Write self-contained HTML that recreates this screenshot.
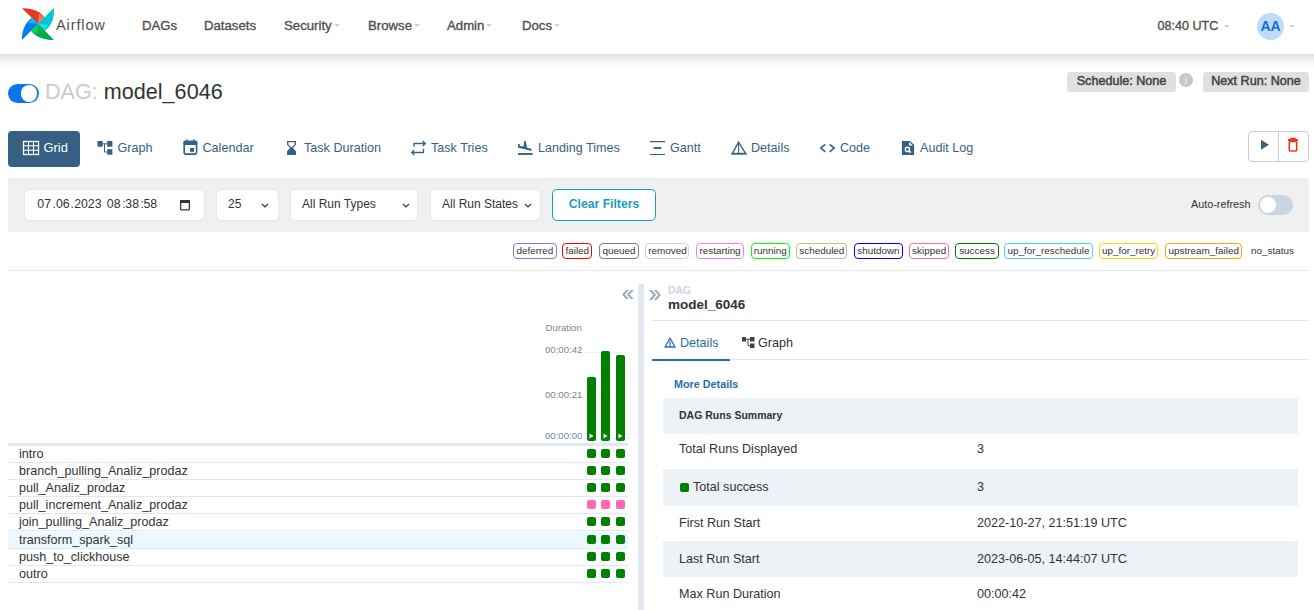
<!DOCTYPE html>
<html><head><meta charset="utf-8">
<style>
*{box-sizing:border-box;margin:0;padding:0}
html,body{width:1314px;height:610px;overflow:hidden;background:#fff;font-family:"Liberation Sans",sans-serif;color:#51504f;font-size:12.6px}
.a{position:absolute;white-space:nowrap}
#nav{position:absolute;left:0;top:0;width:1314px;height:54px;background:#fff;z-index:2}
#shd{position:absolute;left:0;top:54px;width:1314px;height:17px;background:linear-gradient(rgba(0,0,0,.13),rgba(0,0,0,.07) 25%,rgba(0,0,0,.025) 60%,rgba(0,0,0,0));z-index:1}
.nl{position:absolute;top:18px;font-size:13.2px;font-weight:400;-webkit-text-stroke:0.35px #51504f;color:#51504f;line-height:16px}
.car{display:inline-block;width:0;height:0;border-left:3px solid transparent;border-right:3px solid transparent;border-top:3px solid #dcc8e0;vertical-align:baseline;margin-left:2px;position:relative;top:-3px;-webkit-text-stroke:0}
.tab{position:absolute;top:130px;height:36px;line-height:36px;color:#365f84;font-size:12.6px}
.tab svg{position:absolute}
.fb{position:absolute;background:#fff;border:1px solid #e2e8f0;border-radius:5px;height:32px;top:189px;color:#333;font-size:12px;line-height:30px}
.dt{top:197px;font-size:12.3px;line-height:14px;color:#333}
.lg{position:absolute;top:243px;height:15.5px;border:1px solid;border-radius:4px;font-size:9.9px;line-height:13.5px;text-align:center;color:#333;background:#fff}
.row{position:absolute;left:8px;width:620px;height:17.1px;border-bottom:1px solid #e2e8f0;font-size:12.6px;color:#333;line-height:16px}
.cl{font-size:9.6px;color:#7a8699;line-height:11px}
.row span{position:absolute;left:11px;top:0}
.sq{position:absolute;width:9px;height:9px;border-radius:2px;background:#008000;top:3px}
.tk{left:679px;font-size:12.6px;color:#333;line-height:14px}
.tv{left:977px;font-size:12.6px;color:#333;line-height:14px}
</style></head><body>
<div id="shd"></div>
<div id="nav">
  <svg class="a" style="left:18px;top:4px" width="40" height="40" viewBox="0 0 610 610">
    <path d="M60,65 L305,300 L405,210 C350,120 230,60 60,65 Z" fill="#e43921"/>
    <path d="M320,150 L405,210 L305,300 Z" fill="#ff7557"/>
    <path d="M548,60 L305,300 L405,410 C520,330 555,200 548,60 Z" fill="#00c7d4"/>
    <path d="M455,320 L405,410 L305,300 Z" fill="#11e1ee"/>
    <path d="M548,548 L305,300 L200,410 C260,490 380,550 548,548 Z" fill="#00ad46"/>
    <path d="M290,455 L200,410 L305,300 Z" fill="#04d659"/>
    <path d="M60,548 L305,300 L215,205 C100,290 55,420 60,548 Z" fill="#017cee"/>
    <path d="M155,290 L215,205 L305,300 Z" fill="#0cb6ff"/>
  </svg>
  <div class="a" style="left:56px;top:16px;font-size:14.6px;letter-spacing:0.85px;color:#51504f;line-height:18px">Airflow</div>
  <div class="nl" style="left:142px">DAGs</div>
  <div class="nl" style="left:204px">Datasets</div>
  <div class="nl" style="left:284px">Security<span class="car"></span></div>
  <div class="nl" style="left:368px">Browse<span class="car"></span></div>
  <div class="nl" style="left:447px">Admin<span class="car"></span></div>
  <div class="nl" style="left:522px">Docs<span class="car"></span></div>
  <div class="nl" style="left:1157.5px;font-size:12.6px">08:40 UTC<span class="car" style="margin-left:6px;top:-2px"></span></div>
  <div class="a" style="left:1257px;top:13px;width:27px;height:27px;border-radius:50%;background:#bfdbf9;color:#0a6fe0;font-weight:700;font-size:14px;line-height:27px;text-align:center">AA</div>
  <div style="position:absolute;left:1289px;top:25px;width:0;height:0;border-left:3px solid transparent;border-right:3px solid transparent;border-top:3px solid #dcc8e0"></div>
</div>

<!-- DAG title -->
<div class="a" style="left:8px;top:84px;width:31px;height:19px;border-radius:10px;background:#0b76ea"></div>
<div class="a" style="left:20.5px;top:85px;width:16.8px;height:17px;border-radius:50%;background:#fff"></div>
<div class="a" style="left:45px;top:79px;font-size:21.6px;line-height:26px;color:#ccc">DAG: <span style="color:#333">model_6046</span></div>

<div class="a" style="left:1067px;top:72px;width:109px;height:20px;background:#e0e0e0;border-radius:3px;font-size:12.6px;-webkit-text-stroke:0.5px #444;color:#444;line-height:18px;text-align:center">Schedule: None</div>
<div class="a" style="left:1178.5px;top:72.5px;width:14.5px;height:14px;border-radius:50%;background:#c8c8c8;color:#f4f4f4;font-size:11px;line-height:14px;text-align:center">i</div>
<div class="a" style="left:1203px;top:72px;width:106px;height:20px;background:#e0e0e0;border-radius:3px;font-size:12.6px;-webkit-text-stroke:0.5px #444;color:#444;line-height:18px;text-align:center">Next Run: None</div>

<!-- Tabs -->
<div class="a" style="left:8px;top:131px;width:72px;height:36px;background:#365f84;border-radius:4px"></div>
<svg class="a" style="left:22px;top:140px" width="18" height="16" viewBox="0 0 18 16"><rect x="1.5" y="1.5" width="15" height="13" fill="none" stroke="#fff" stroke-width="1.3"/><path d="M6.5 1v14M11.5 1v14M1 5.8h16M1 10.2h16" stroke="#fff" stroke-width="1.1"/></svg>
<div class="tab" style="left:43.5px;top:129.6px;color:#fff;font-size:12.9px">Grid</div>

<svg class="a" style="left:95px;top:138px" width="20" height="20" viewBox="0 0 20 20"><rect x="2.5" y="3" width="5.2" height="5.7" fill="#365f84"/><rect x="12.2" y="3" width="5.2" height="5.7" fill="#365f84"/><rect x="12.2" y="11.2" width="5.2" height="5.5" fill="#365f84"/><path d="M7.5 5.8h5M9.5 5.8v8.2h3" stroke="#365f84" stroke-width="1" fill="none"/></svg>
<div class="tab" style="left:117.5px">Graph</div>

<svg class="a" style="left:175px;top:133px" width="30" height="30" viewBox="0 0 30 30"><rect x="9.2" y="8.5" width="12.4" height="12.6" rx="1.3" fill="none" stroke="#365f84" stroke-width="1.6"/><rect x="8.5" y="7.8" width="13.8" height="4.2" rx="1" fill="#365f84"/><rect x="11" y="6.5" width="1.6" height="2" fill="#365f84"/><rect x="18" y="6.5" width="1.6" height="2" fill="#365f84"/><rect x="15" y="15" width="4" height="3.8" fill="#365f84"/></svg>
<div class="tab" style="left:202.5px">Calendar</div>

<svg class="a" style="left:287px;top:141px" width="9" height="14" viewBox="0 0 9 14"><path d="M0.7 0.7H8.3V3.6L5 7L8.3 10.4V13.3H0.7V10.4L4 7L0.7 3.6Z" fill="none" stroke="#365f84" stroke-width="1.3"/><path d="M0.7 13.3H8.3V10.4L4.5 6.6L0.7 10.4Z" fill="#365f84"/></svg>
<div class="tab" style="left:304px">Task Duration</div>

<svg class="a" style="left:406px;top:136px" width="24" height="24" viewBox="0 0 24 24"><path d="M8 10.8V7.5H19M16.7 5L19.3 7.5L16.7 10M17.5 12.8V16.5H6M8.3 14L5.7 16.5L8.3 19" fill="none" stroke="#365f84" stroke-width="1.3"/></svg>
<div class="tab" style="left:431px">Task Tries</div>

<svg class="a" style="left:514px;top:138px" width="22" height="18" viewBox="0 0 22 18"><rect x="4" y="15" width="14.6" height="1.9" fill="#365f84"/><path d="M4.1 6H5.8V8L9.6 8.6L10.1 3H11.6L13.1 9.8L17 10.8L18 12.2L16.6 12.8L11 11.2L4.1 9.7Z" fill="#365f84"/></svg>
<div class="tab" style="left:538px">Landing Times</div>

<svg class="a" style="left:644px;top:136px" width="24" height="24" viewBox="0 0 24 24"><path d="M6 5.6H21M6 18.5H21" stroke="#365f84" stroke-width="1.2"/><rect x="9.6" y="11" width="7.7" height="1.9" fill="#365f84"/></svg>
<div class="tab" style="left:670px">Gantt</div>

<svg class="a" style="left:726px;top:136px" width="24" height="24" viewBox="0 0 24 24"><path d="M12.6 6.2L6.2 17.8H19.8Z" fill="none" stroke="#365f84" stroke-width="1.35" stroke-linejoin="miter"/><path d="M5.5 17.6H20.5" stroke="#365f84" stroke-width="1.6"/><path d="M12.6 8V17.5" stroke="#365f84" stroke-width="1.1"/></svg>
<div class="tab" style="left:751px">Details</div>

<svg class="a" style="left:814px;top:136px" width="24" height="24" viewBox="0 0 24 24"><path d="M11.3 8.4L6.8 12.1L11.3 15.8M15.7 8.4L20.2 12.1L15.7 15.8" fill="none" stroke="#365f84" stroke-width="1.6"/></svg>
<div class="tab" style="left:840px">Code</div>

<svg class="a" style="left:896px;top:136px" width="24" height="24" viewBox="0 0 24 24"><path d="M5.9 4.9H13.8L18.1 8.8V18.9H5.9Z" fill="#365f84"/><path d="M13 5.9V9.6H16.9Z" fill="#fff"/><circle cx="11.4" cy="13.4" r="2.1" fill="none" stroke="#fff" stroke-width="1.4"/><path d="M12.9 14.9L14.8 16.6" stroke="#fff" stroke-width="1.5"/></svg>
<div class="tab" style="left:920px">Audit Log</div>

<div class="a" style="left:1248px;top:131px;width:61px;height:31px;border:1px solid #ccc;border-radius:4px"></div>
<div class="a" style="left:1278px;top:131px;width:1px;height:31px;background:#ccc"></div>
<svg class="a" style="left:1260px;top:139px" width="10" height="12" viewBox="0 0 10 12"><path d="M1 0.8v10l8-5z" fill="#365f84"/></svg>
<svg class="a" style="left:1287px;top:137px" width="12" height="16" viewBox="0 0 12 16"><path d="M1 3h10" stroke="#e43921" stroke-width="2"/><path d="M4 2.5v-1h4v1" stroke="#e43921" stroke-width="1.6" fill="none"/><rect x="2.3" y="4.5" width="7.4" height="9.5" rx="1" fill="none" stroke="#e43921" stroke-width="1.6"/></svg>

<!-- Filter bar -->
<div class="a" style="left:8px;top:178px;width:1301px;height:54px;background:#f0f0f0"></div>
<div class="fb" style="left:24px;width:181px"></div>
<div class="a dt" style="left:37.3px">07</div><div class="a dt" style="left:52.6px">.</div><div class="a dt" style="left:56px">06</div><div class="a dt" style="left:70.6px">.</div><div class="a dt" style="left:74.2px">2023</div><div class="a dt" style="left:106.8px">08</div><div class="a dt" style="left:122.2px">:</div><div class="a dt" style="left:125.3px">38</div><div class="a dt" style="left:140.4px">:</div><div class="a dt" style="left:143.4px">58</div>
<svg class="a" style="left:179px;top:199px" width="12" height="12" viewBox="0 0 12 12"><rect x="1.6" y="1.8" width="8.8" height="9" rx="1" fill="none" stroke="#333" stroke-width="1.3"/><rect x="1" y="1" width="10" height="3" rx="0.5" fill="#333"/></svg>
<div class="fb" style="left:215.5px;width:63px;padding-left:11.5px;line-height:28.8px">25</div>
<div class="fb" style="left:290px;width:128px;padding-left:11px;line-height:28.6px">All Run Types</div>
<div class="fb" style="left:430px;width:110.5px;padding-left:11px;line-height:28.6px">All Run States</div>
<svg class="a" style="left:260px;top:201.5px" width="10" height="8" viewBox="0 0 10 8"><path d="M2 2l3 3 3-3" fill="none" stroke="#333" stroke-width="1.2"/></svg>
<svg class="a" style="left:400.5px;top:201.5px" width="10" height="8" viewBox="0 0 10 8"><path d="M2 2l3 3 3-3" fill="none" stroke="#333" stroke-width="1.2"/></svg>
<svg class="a" style="left:523px;top:201.5px" width="10" height="8" viewBox="0 0 10 8"><path d="M2 2l3 3 3-3" fill="none" stroke="#333" stroke-width="1.2"/></svg>
<div class="a" style="left:552px;top:189px;width:104px;height:32px;background:#fff;border:1px solid #14a0c4;border-radius:5px;color:#1a9cc4;font-weight:700;font-size:12.2px;line-height:28.5px;text-align:center">Clear Filters</div>
<div class="a" style="left:1191px;top:197px;font-size:10.8px;color:#333;line-height:14px">Auto-refresh</div>
<div class="a" style="left:1258px;top:195px;width:35px;height:20px;border-radius:10px;background:#cbd5e0"></div>
<div class="a" style="left:1260px;top:197px;width:16px;height:16px;border-radius:50%;background:#fff"></div>

<!-- Legend -->
<div class="lg" style="left:513px;width:43.6px;border-color:#9370db">deferred</div>
<div class="lg" style="left:562.1px;width:30.4px;border-color:#ff0000">failed</div>
<div class="lg" style="left:599.3px;width:39.3px;border-color:#808080">queued</div>
<div class="lg" style="left:645.4px;width:44.1px;border-color:#d3d3d3">removed</div>
<div class="lg" style="left:696.3px;width:47.5px;border-color:#ee82ee">restarting</div>
<div class="lg" style="left:750.5px;width:39.5px;border-color:#00ff00">running</div>
<div class="lg" style="left:796.2px;width:51.3px;border-color:#d2b48c">scheduled</div>
<div class="lg" style="left:854.4px;width:48.2px;border-color:#0000ff">shutdown</div>
<div class="lg" style="left:909.2px;width:39.9px;border-color:#ff69b4">skipped</div>
<div class="lg" style="left:955.3px;width:43.4px;border-color:#008000">success</div>
<div class="lg" style="left:1004.2px;width:88.6px;border-color:#40e0d0">up_for_reschedule</div>
<div class="lg" style="left:1099px;width:59.4px;border-color:#ffd700">up_for_retry</div>
<div class="lg" style="left:1165.1px;width:77.3px;border-color:#ffa500">upstream_failed</div>
<div class="a" style="left:1251px;top:244px;font-size:9.9px;line-height:14px;color:#333">no_status</div>
<div class="a" style="left:8px;top:270px;width:1301px;height:1px;background:#e2e8f0"></div>

<!-- Left grid -->
<svg class="a" style="left:621.8px;top:290px" width="12" height="9.2" viewBox="0 0 12 9.2"><path d="M4.2 0H7.1L2.9 4.6L7.1 9.2H4.2L0 4.6ZM9 0H11.9L7.7 4.6L11.9 9.2H9L4.8 4.6Z" fill="#a0aec0"/></svg>
<div class="a cl" style="left:545.5px;top:322.2px">Duration</div>
<div class="a cl" style="left:545px;top:344.3px">00:00:42</div>
<div class="a cl" style="left:545px;top:389px">00:00:21</div>
<div class="a cl" style="left:545px;top:430.1px">00:00:00</div>
<div class="a" style="left:584px;top:352px;width:44px;height:1px;background:#edf2f7"></div>
<div class="a" style="left:584px;top:397px;width:44px;height:1px;background:#edf2f7"></div>
<div class="a" style="left:584px;top:438px;width:44px;height:1px;border-top:1px dashed #e2e8f0"></div>
<div class="a" style="left:587px;top:377px;width:9px;height:64px;background:#008000;border-radius:2px"></div>
<div class="a" style="left:601px;top:351px;width:9px;height:90px;background:#008000;border-radius:2px"></div>
<div class="a" style="left:616px;top:355px;width:9px;height:86px;background:#008000;border-radius:2px"></div>
<svg class="a" style="left:589px;top:433px" width="5" height="6"><path d="M0.5 0.5v5l4-2.5z" fill="#fff"/></svg>
<svg class="a" style="left:603px;top:433px" width="5" height="6"><path d="M0.5 0.5v5l4-2.5z" fill="#fff"/></svg>
<svg class="a" style="left:618px;top:433px" width="5" height="6"><path d="M0.5 0.5v5l4-2.5z" fill="#fff"/></svg>
<div class="a" style="left:8px;top:443px;width:620px;height:3px;background:#e2e8f0"></div>

<div class="row" style="top:446.0px"><span>intro</span></div>
<div class="row" style="top:463.1px"><span>branch_pulling_Analiz_prodaz</span></div>
<div class="row" style="top:480.2px"><span>pull_Analiz_prodaz</span></div>
<div class="row" style="top:497.3px"><span>pull_increment_Analiz_prodaz</span></div>
<div class="row" style="top:514.4px"><span>join_pulling_Analiz_prodaz</span></div>
<div class="row" style="top:531.5px;background:#ebf8ff"><span>transform_spark_sql</span></div>
<div class="row" style="top:548.6px"><span>push_to_clickhouse</span></div>
<div class="row" style="top:565.7px"><span>outro</span></div>
<div class="sq a" style="left:587px;top:449.0px;background:#008000"></div>
<div class="sq a" style="left:601px;top:449.0px;background:#008000"></div>
<div class="sq a" style="left:616px;top:449.0px;background:#008000"></div>
<div class="sq a" style="left:587px;top:466.1px;background:#008000"></div>
<div class="sq a" style="left:601px;top:466.1px;background:#008000"></div>
<div class="sq a" style="left:616px;top:466.1px;background:#008000"></div>
<div class="sq a" style="left:587px;top:483.2px;background:#008000"></div>
<div class="sq a" style="left:601px;top:483.2px;background:#008000"></div>
<div class="sq a" style="left:616px;top:483.2px;background:#008000"></div>
<div class="sq a" style="left:587px;top:500.3px;background:#ff69b4"></div>
<div class="sq a" style="left:601px;top:500.3px;background:#ff69b4"></div>
<div class="sq a" style="left:616px;top:500.3px;background:#ff69b4"></div>
<div class="sq a" style="left:587px;top:517.4px;background:#008000"></div>
<div class="sq a" style="left:601px;top:517.4px;background:#008000"></div>
<div class="sq a" style="left:616px;top:517.4px;background:#008000"></div>
<div class="sq a" style="left:587px;top:534.5px;background:#008000"></div>
<div class="sq a" style="left:601px;top:534.5px;background:#008000"></div>
<div class="sq a" style="left:616px;top:534.5px;background:#008000"></div>
<div class="sq a" style="left:587px;top:551.6px;background:#008000"></div>
<div class="sq a" style="left:601px;top:551.6px;background:#008000"></div>
<div class="sq a" style="left:616px;top:551.6px;background:#008000"></div>
<div class="sq a" style="left:587px;top:568.7px;background:#008000"></div>
<div class="sq a" style="left:601px;top:568.7px;background:#008000"></div>
<div class="sq a" style="left:616px;top:568.7px;background:#008000"></div>

<!-- Divider -->
<div class="a" style="left:638px;top:284px;width:6px;height:326px;background:#e2e8f0"></div>

<!-- Right panel -->
<svg class="a" style="left:648.5px;top:290px" width="13" height="10" viewBox="0 0 13 10"><path d="M0 0H3L7.2 5L3 10H0L4.2 5ZM4.8 0H7.8L12 5L7.8 10H4.8L9 5Z" fill="#a0aec0"/></svg>
<div class="a" style="left:668px;top:284.5px;font-size:10.3px;font-weight:700;color:#cbd5e0;line-height:12px">DAG</div>
<div class="a" style="left:668px;top:297.5px;font-size:13.5px;font-weight:700;color:#333;line-height:14px">model_6046</div>
<div class="a" style="left:652px;top:320px;width:657px;height:1px;background:#e2e8f0"></div>
<svg class="a" style="left:664px;top:337px" width="12" height="11" viewBox="0 0 12 11"><path d="M6 1L1 10h10z" fill="none" stroke="#2b6cb0" stroke-width="1.3" stroke-linejoin="round"/><path d="M6 4v6" stroke="#2b6cb0" stroke-width="1.2"/></svg>
<div class="a" style="left:680px;top:335px;font-size:12.6px;color:#2b6cb0;line-height:16px">Details</div>
<svg class="a" style="left:742px;top:337px" width="13" height="11" viewBox="0 0 13 11"><rect x="0" y="0" width="4" height="4.5" fill="#444"/><rect x="8" y="0" width="4.5" height="4.5" fill="#444"/><rect x="8" y="6.5" width="4.5" height="4.5" fill="#444"/><path d="M4 2.2h4M6 2.2v6.5h2" stroke="#444" fill="none"/></svg>
<div class="a" style="left:758px;top:335px;font-size:12.6px;color:#333;line-height:16px">Graph</div>
<div class="a" style="left:652px;top:359px;width:657px;height:1px;background:#e2e8f0"></div>
<div class="a" style="left:652px;top:359px;width:78px;height:2px;background:#2b6cb0"></div>
<div class="a" style="left:674px;top:377px;font-size:10.8px;font-weight:700;color:#2b6cb0;line-height:14px">More Details</div>

<div class="a" style="left:663px;top:398px;width:635px;height:36px;background:#edf2f7"></div>
<div class="a" style="left:663px;top:469px;width:635px;height:36.6px;background:#edf2f7"></div>
<div class="a" style="left:663px;top:541px;width:635px;height:36.4px;background:#edf2f7"></div>
<div class="a tk" style="top:408.2px;font-weight:700;font-size:10.5px">DAG Runs Summary</div>
<div class="a tk" style="top:442.3px">Total Runs Displayed</div><div class="a tv" style="top:442.3px">3</div>
<div class="a tk" style="top:479.9px;left:693px">Total success</div><div class="a tv" style="top:479.9px">3</div>
<div class="a" style="left:679.5px;top:483px;width:9px;height:9px;background:#008000;border-radius:2px"></div>
<div class="a tk" style="top:515.6px">First Run Start</div><div class="a tv" style="top:515.6px">2022-10-27, 21:51:19 UTC</div>
<div class="a tk" style="top:551.6px">Last Run Start</div><div class="a tv" style="top:551.6px">2023-06-05, 14:44:07 UTC</div>
<div class="a tk" style="top:586.8px">Max Run Duration</div><div class="a tv" style="top:586.8px">00:00:42</div>
</body></html>
